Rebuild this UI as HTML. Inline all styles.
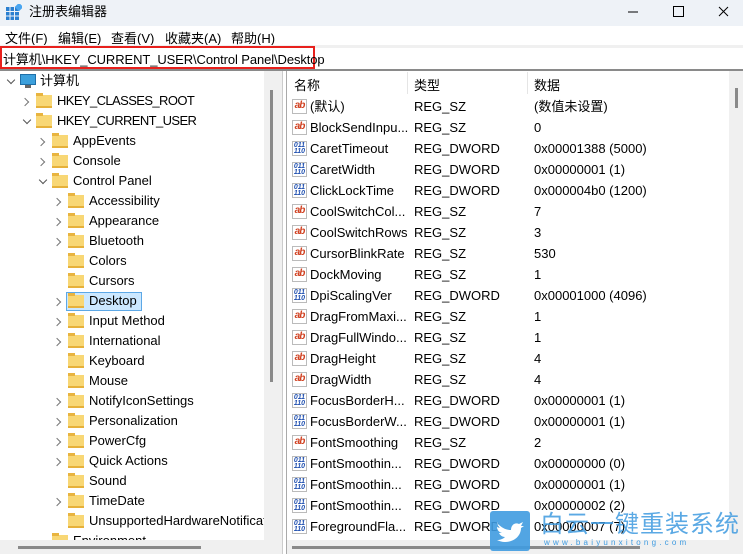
<!DOCTYPE html>
<html><head><meta charset="utf-8"><style>
*{margin:0;padding:0;box-sizing:border-box}
body{width:743px;height:554px;overflow:hidden;background:#fff;font-family:"Liberation Sans","Noto Sans CJK SC",sans-serif;font-size:13px;color:#000;position:relative}
.a{position:absolute;white-space:nowrap}
.f{position:absolute;width:16px;height:13px;background:#f8d775;border-bottom:2px solid #e6b13a}
.f:before{content:"";position:absolute;left:0;top:-2px;width:7px;height:3px;background:#e8b440}
.c{position:absolute;width:8px;height:8px}
.c:before{content:"";position:absolute;left:0;top:1px;width:5px;height:5px;border-right:1.3px solid #777;border-top:1.3px solid #777;transform:rotate(45deg)}
.d{position:absolute;width:8px;height:8px}
.d:before{content:"";position:absolute;left:1px;top:-1px;width:5px;height:5px;border-right:1.3px solid #555;border-bottom:1.3px solid #555;transform:rotate(45deg)}
.t{position:absolute;line-height:20px;height:20px;white-space:nowrap}
.r{position:absolute;left:287px;width:442px;height:21px;line-height:21px}
.r span{position:absolute;white-space:nowrap}
.ab{position:absolute;left:5px;top:3px;width:15px;height:15px;border:1px solid #bbb;background:#fff;color:#d04020;font-weight:bold;font-size:10px;line-height:12px;text-align:center;letter-spacing:-1px}
.dw{position:absolute;left:5px;top:3px;width:15px;height:15px;border:1px solid #bbb;background:#fff;color:#2050b0;font-weight:bold;font-size:7px;line-height:6px;text-align:center;padding-top:1px}
</style></head><body>
<div class="a" style="left:0;top:0;width:743px;height:26px;background:#eef2f7"></div>
<svg class="a" style="left:6px;top:4px" width="16" height="16"><rect x="0" y="3" width="13" height="13" fill="#2a7fd0"/><path d="M4 3v13M8.5 3v13M0 7.5h13M0 12h13" stroke="#eef2f7" stroke-width="1"/><rect x="10" y="0" width="6" height="6" fill="#49a5f0" transform="rotate(45 13 3)"/></svg>
<div class="a" style="left:29px;top:1px;font-size:13px">注册表编辑器</div>
<svg class="a" style="left:620px;top:4px" width="120" height="16"><path d="M8 8h10" stroke="#000"/><rect x="53.5" y="2.5" width="10" height="10" fill="none" stroke="#000"/><path d="M99 3l9 9M108 3l-9 9" stroke="#000"/></svg>
<div class="a" style="left:5px;top:28px">文件(F)</div>
<div class="a" style="left:58px;top:28px">编辑(E)</div>
<div class="a" style="left:111px;top:28px">查看(V)</div>
<div class="a" style="left:165px;top:28px">收藏夹(A)</div>
<div class="a" style="left:231px;top:28px">帮助(H)</div>
<div class="a" style="left:0;top:45px;width:743px;height:3px;background:#f0f0f0"></div>
<div class="a" style="left:0;top:46px;width:315px;height:23px;border:2px solid #e8201c"></div>
<div class="a" style="left:3px;top:49px;font-size:13px;letter-spacing:-0.1px">计算机\HKEY_CURRENT_USER\Control Panel\Desktop</div>
<div class="a" style="left:0;top:69px;width:743px;height:2px;background:#8a8a8a"></div>
<div class="a" style="left:264px;top:71px;width:18px;height:469px;background:#f0f0f0"></div>
<div class="a" style="left:270px;top:90px;width:3px;height:292px;background:#8a8a8a"></div>
<div class="a" style="left:282px;top:71px;width:5px;height:483px;background:#fff;border-left:1px solid #ccc;border-right:1px solid #aaa"></div>
<div class="a" style="left:0;top:540px;width:282px;height:14px;background:#f0f0f0"></div>
<div class="a" style="left:18px;top:546px;width:183px;height:3px;background:#8a8a8a"></div>
<div class="d" style="left:7px;top:78px"></div>
<div class="a" style="left:20px;top:74px;width:16px;height:11px;background:#3ca0dc;border:1px solid #1f6fa8"></div><div class="a" style="left:25px;top:85px;width:6px;height:3px;background:#666"></div>
<div class="t" style="left:40px;top:71px">计算机</div>
<div class="c" style="left:22px;top:98px"></div><div class="f" style="left:36px;top:95px"></div><div class="t" style="left:57px;top:91px;letter-spacing:-0.6px">HKEY_CLASSES_ROOT</div>
<div class="d" style="left:23px;top:118px"></div><div class="f" style="left:36px;top:115px"></div><div class="t" style="left:57px;top:111px;letter-spacing:-0.6px">HKEY_CURRENT_USER</div>
<div class="c" style="left:38px;top:138px"></div><div class="f" style="left:52px;top:135px"></div><div class="t" style="left:73px;top:131px">AppEvents</div>
<div class="c" style="left:38px;top:158px"></div><div class="f" style="left:52px;top:155px"></div><div class="t" style="left:73px;top:151px">Console</div>
<div class="d" style="left:39px;top:178px"></div><div class="f" style="left:52px;top:175px"></div><div class="t" style="left:73px;top:171px">Control Panel</div>
<div class="c" style="left:54px;top:198px"></div><div class="f" style="left:68px;top:195px"></div><div class="t" style="left:89px;top:191px">Accessibility</div>
<div class="c" style="left:54px;top:218px"></div><div class="f" style="left:68px;top:215px"></div><div class="t" style="left:89px;top:211px">Appearance</div>
<div class="c" style="left:54px;top:238px"></div><div class="f" style="left:68px;top:235px"></div><div class="t" style="left:89px;top:231px">Bluetooth</div>
<div class="f" style="left:68px;top:255px"></div><div class="t" style="left:89px;top:251px">Colors</div>
<div class="f" style="left:68px;top:275px"></div><div class="t" style="left:89px;top:271px">Cursors</div>
<div class="a" style="left:66px;top:292px;width:76px;height:19px;background:#cce8ff;border:1px solid #5da8e6"></div>
<div class="c" style="left:54px;top:298px"></div><div class="f" style="left:68px;top:295px"></div><div class="t" style="left:89px;top:291px">Desktop</div>
<div class="c" style="left:54px;top:318px"></div><div class="f" style="left:68px;top:315px"></div><div class="t" style="left:89px;top:311px">Input Method</div>
<div class="c" style="left:54px;top:338px"></div><div class="f" style="left:68px;top:335px"></div><div class="t" style="left:89px;top:331px">International</div>
<div class="f" style="left:68px;top:355px"></div><div class="t" style="left:89px;top:351px">Keyboard</div>
<div class="f" style="left:68px;top:375px"></div><div class="t" style="left:89px;top:371px">Mouse</div>
<div class="c" style="left:54px;top:398px"></div><div class="f" style="left:68px;top:395px"></div><div class="t" style="left:89px;top:391px">NotifyIconSettings</div>
<div class="c" style="left:54px;top:418px"></div><div class="f" style="left:68px;top:415px"></div><div class="t" style="left:89px;top:411px">Personalization</div>
<div class="c" style="left:54px;top:438px"></div><div class="f" style="left:68px;top:435px"></div><div class="t" style="left:89px;top:431px">PowerCfg</div>
<div class="c" style="left:54px;top:458px"></div><div class="f" style="left:68px;top:455px"></div><div class="t" style="left:89px;top:451px">Quick Actions</div>
<div class="f" style="left:68px;top:475px"></div><div class="t" style="left:89px;top:471px">Sound</div>
<div class="c" style="left:54px;top:498px"></div><div class="f" style="left:68px;top:495px"></div><div class="t" style="left:89px;top:491px">TimeDate</div>
<div class="a" style="left:0;top:511px;width:264px;height:20px;overflow:hidden"><div class="f" style="left:68px;top:4px"></div><div class="t" style="left:89px;top:0">UnsupportedHardwareNotificationCache</div></div>
<div class="a" style="left:0;top:531px;width:264px;height:9px;overflow:hidden"><div class="f" style="left:52px;top:4px"></div><div class="t" style="left:73px;top:0">Environment</div></div>
<div class="a" style="left:729px;top:71px;width:14px;height:483px;background:#f0f0f0"></div>
<div class="a" style="left:735px;top:88px;width:3px;height:20px;background:#8a8a8a"></div>
<div class="a" style="left:287px;top:540px;width:442px;height:14px;background:#f0f0f0"></div>
<div class="a" style="left:292px;top:546px;width:348px;height:3px;background:#8a8a8a"></div>
<div class="a" style="left:294px;top:75px">名称</div>
<div class="a" style="left:407px;top:72px;width:1px;height:22px;background:#e5e5e5"></div>
<div class="a" style="left:414px;top:75px">类型</div>
<div class="a" style="left:527px;top:72px;width:1px;height:22px;background:#e5e5e5"></div>
<div class="a" style="left:534px;top:75px">数据</div>
<div class="r" style="top:96px"><i class="ab">ab</i><span style="left:23px">(默认)</span><span style="left:127px">REG_SZ</span><span style="left:247px">(数值未设置)</span></div>
<div class="r" style="top:117px"><i class="ab">ab</i><span style="left:23px">BlockSendInpu...</span><span style="left:127px">REG_SZ</span><span style="left:247px">0</span></div>
<div class="r" style="top:138px"><i class="dw">011<br>110</i><span style="left:23px">CaretTimeout</span><span style="left:127px">REG_DWORD</span><span style="left:247px">0x00001388 (5000)</span></div>
<div class="r" style="top:159px"><i class="dw">011<br>110</i><span style="left:23px">CaretWidth</span><span style="left:127px">REG_DWORD</span><span style="left:247px">0x00000001 (1)</span></div>
<div class="r" style="top:180px"><i class="dw">011<br>110</i><span style="left:23px">ClickLockTime</span><span style="left:127px">REG_DWORD</span><span style="left:247px">0x000004b0 (1200)</span></div>
<div class="r" style="top:201px"><i class="ab">ab</i><span style="left:23px">CoolSwitchCol...</span><span style="left:127px">REG_SZ</span><span style="left:247px">7</span></div>
<div class="r" style="top:222px"><i class="ab">ab</i><span style="left:23px">CoolSwitchRows</span><span style="left:127px">REG_SZ</span><span style="left:247px">3</span></div>
<div class="r" style="top:243px"><i class="ab">ab</i><span style="left:23px">CursorBlinkRate</span><span style="left:127px">REG_SZ</span><span style="left:247px">530</span></div>
<div class="r" style="top:264px"><i class="ab">ab</i><span style="left:23px">DockMoving</span><span style="left:127px">REG_SZ</span><span style="left:247px">1</span></div>
<div class="r" style="top:285px"><i class="dw">011<br>110</i><span style="left:23px">DpiScalingVer</span><span style="left:127px">REG_DWORD</span><span style="left:247px">0x00001000 (4096)</span></div>
<div class="r" style="top:306px"><i class="ab">ab</i><span style="left:23px">DragFromMaxi...</span><span style="left:127px">REG_SZ</span><span style="left:247px">1</span></div>
<div class="r" style="top:327px"><i class="ab">ab</i><span style="left:23px">DragFullWindo...</span><span style="left:127px">REG_SZ</span><span style="left:247px">1</span></div>
<div class="r" style="top:348px"><i class="ab">ab</i><span style="left:23px">DragHeight</span><span style="left:127px">REG_SZ</span><span style="left:247px">4</span></div>
<div class="r" style="top:369px"><i class="ab">ab</i><span style="left:23px">DragWidth</span><span style="left:127px">REG_SZ</span><span style="left:247px">4</span></div>
<div class="r" style="top:390px"><i class="dw">011<br>110</i><span style="left:23px">FocusBorderH...</span><span style="left:127px">REG_DWORD</span><span style="left:247px">0x00000001 (1)</span></div>
<div class="r" style="top:411px"><i class="dw">011<br>110</i><span style="left:23px">FocusBorderW...</span><span style="left:127px">REG_DWORD</span><span style="left:247px">0x00000001 (1)</span></div>
<div class="r" style="top:432px"><i class="ab">ab</i><span style="left:23px">FontSmoothing</span><span style="left:127px">REG_SZ</span><span style="left:247px">2</span></div>
<div class="r" style="top:453px"><i class="dw">011<br>110</i><span style="left:23px">FontSmoothin...</span><span style="left:127px">REG_DWORD</span><span style="left:247px">0x00000000 (0)</span></div>
<div class="r" style="top:474px"><i class="dw">011<br>110</i><span style="left:23px">FontSmoothin...</span><span style="left:127px">REG_DWORD</span><span style="left:247px">0x00000001 (1)</span></div>
<div class="r" style="top:495px"><i class="dw">011<br>110</i><span style="left:23px">FontSmoothin...</span><span style="left:127px">REG_DWORD</span><span style="left:247px">0x00000002 (2)</span></div>
<div class="r" style="top:516px"><i class="dw">011<br>110</i><span style="left:23px">ForegroundFla...</span><span style="left:127px">REG_DWORD</span><span style="left:247px">0x00000007 (7)</span></div>
<div class="a" style="left:490px;top:511px;width:40px;height:40px;background:#3f9be0;opacity:.9;border-radius:3px"></div>
<svg class="a" style="left:494px;top:516px" width="32" height="30"><path d="M4 8c4 4 8 6 13 6 0-5 4-8 8-6l4-2-2 4 3 0-3 2c0 8-7 14-16 14-3 0-6-1-8-2 3 0 6-1 8-3-3 0-5-2-6-4h3c-3-1-5-3-5-6l3 1c-2-2-3-4-2-6z" fill="#fff"/></svg>
<div class="a" style="left:540px;top:507px;width:200px;font-size:24px;color:#3f9be0;opacity:.85;letter-spacing:1px;font-family:'Noto Sans CJK SC',sans-serif;line-height:30px;overflow:hidden">白云一键重装系统</div>
<div class="a" style="left:544px;top:538px;font-size:8px;color:#3f9be0;letter-spacing:3.2px">www.baiyunxitong.com</div>
</body></html>
